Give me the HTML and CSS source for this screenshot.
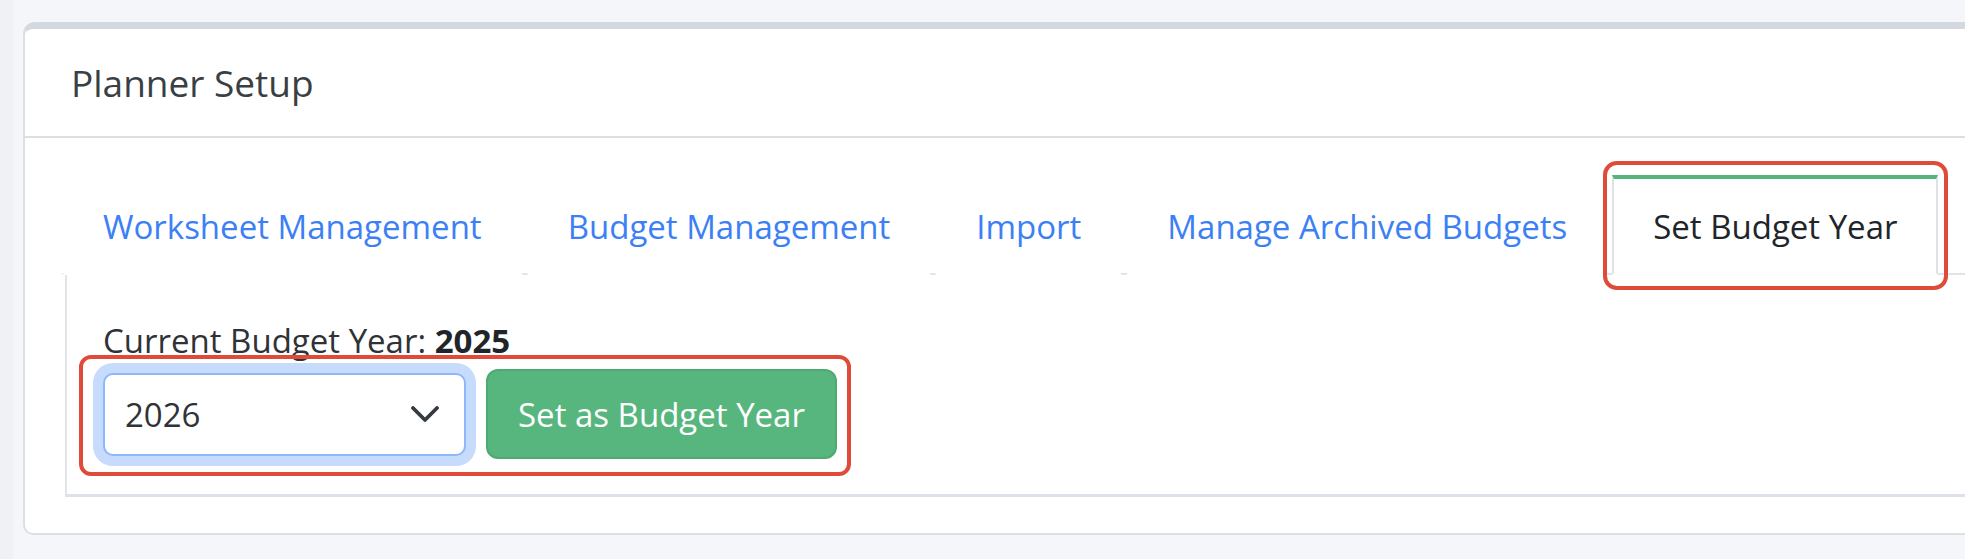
FILE: index.html
```html
<!DOCTYPE html>
<html lang="en">
<head>
<meta charset="utf-8">
<title>Planner Setup</title>
<link rel="stylesheet" href="styles.css">
</head>
<body>
<div class="page">
  <div class="card">
    <div class="card-header">
      <h3 class="card-title">Planner Setup</h3>
    </div>
    <div class="card-body">
      <ul class="nav-tabs">
        <li class="tab">Worksheet Management</li>
        <li class="tab">Budget Management</li>
        <li class="tab">Import</li>
        <li class="tab">Manage Archived Budgets</li>
        <li class="tab active annotated">Set Budget Year</li>
      </ul>
      <div class="tab-content">
        <p class="current">Current Budget Year: <strong>2025</strong></p>
        <div class="form-row">
          <div class="select-wrap">
            <select class="year-select"><option>2026</option><option>2025</option></select>
            <svg class="chevron" width="28" height="17" viewBox="0 0 28 17"><polyline points="2,2 14,14 26,2" fill="none" stroke="#343a40" stroke-width="3.8" stroke-linecap="round" stroke-linejoin="round"/></svg>
          </div>
          <button class="btn-set" type="button">Set as Budget Year</button>
        </div>
      </div>
    </div>
  </div>
</div>
</body>
</html>
```
FILE: styles.css
```css
html, body {
  margin: 0;
  padding: 0;
}
body {
  background: #f4f6f9;
  font-family: "Open Sans", "Noto Sans", "Liberation Sans", sans-serif;
  height: 559px;
  overflow: hidden;
}
.page {
  height: 559px;
  box-sizing: border-box;
  padding: 22px 0 0 10px;
  border-left: 13px solid #eff1f4;
  overflow: hidden;
}
.card {
  margin-right: -60px;
  background: #fff;
  border: 2px solid #dcdfe3;
  border-top: 7px solid #d4d9e0;
  border-radius: 12px 12px 10px 10px;
}
.card-header {
  height: 109px;
  box-sizing: border-box;
  border-bottom: 2px solid #dcdee1;
  display: flex;
  align-items: center;
  padding-left: 46px;
}
.card-title {
  margin: 0;
  font-size: 37px;
  font-weight: 400;
  color: #3a3f44;
}
.card-body {
  padding: 37px 0 36px 40px;
}
.nav-tabs {
  list-style: none;
  margin: 0 0 0 -3px;
  padding: 0;
  display: flex;
  gap: 4px;
  border-bottom: 2px solid #e1e4e8;
}
.tab {
  height: 100px;
  box-sizing: border-box;
  margin-bottom: -2px;
  padding: 0 39px;
  display: flex;
  align-items: center;
  border: 2px solid transparent;
  border-top-width: 4px;
  border-bottom: 2px solid #fff;
  font-size: 33px;
  color: #3b80f5;
  white-space: nowrap;
}
.tab.active {
  border-color: #dee2e6;
  border-top-color: #56b57b;
  border-bottom-color: #fff;
  color: #212529;
  background: #fff;
}
.annotated {
  position: relative;
}
.annotated::after {
  content: "";
  position: absolute;
  top: -18px;
  right: -12px;
  bottom: -17px;
  left: -11px;
  border: 4px solid #e04b39;
  border-radius: 14px;
  pointer-events: none;
}
.tab-content {
  border-left: 2px solid #e1e4e8;
  border-bottom: 3px solid #dde2ea;
  padding: 43px 0 35px 36px;
}
.current {
  margin: 0;
  font-size: 33px;
  line-height: 46px;
  color: #2f3337;
}
.current strong {
  font-weight: 700;
  color: #212529;
}
.form-row {
  margin-top: 5px;
  display: flex;
  align-items: center;
  gap: 20px;
  position: relative;
  width: max-content;
}
.form-row::after {
  content: "";
  position: absolute;
  top: -14px;
  right: -14px;
  bottom: -17px;
  left: -24px;
  border: 4px solid #e04b39;
  border-radius: 12px;
  pointer-events: none;
}
.select-wrap {
  position: relative;
}
.year-select {
  appearance: none;
  -webkit-appearance: none;
  display: block;
  width: 363px;
  height: 83px;
  box-sizing: border-box;
  border: 2px solid #8db8fa;
  border-radius: 10px;
  box-shadow: 0 0 0 10px #c7dbfc;
  padding: 0 0 0 20px;
  margin: 0;
  font-family: inherit;
  font-size: 33px;
  color: #2f3337;
  background: #fff;
  outline: none;
}
.chevron {
  position: absolute;
  right: 27px;
  top: 33px;
  pointer-events: none;
}
.btn-set {
  height: 90px;
  padding: 0 30px;
  margin: 0;
  border: 2px solid #4fa973;
  border-radius: 12px;
  background: #57b67e;
  color: #fff;
  font-family: inherit;
  font-size: 33px;
  cursor: pointer;
}
```
